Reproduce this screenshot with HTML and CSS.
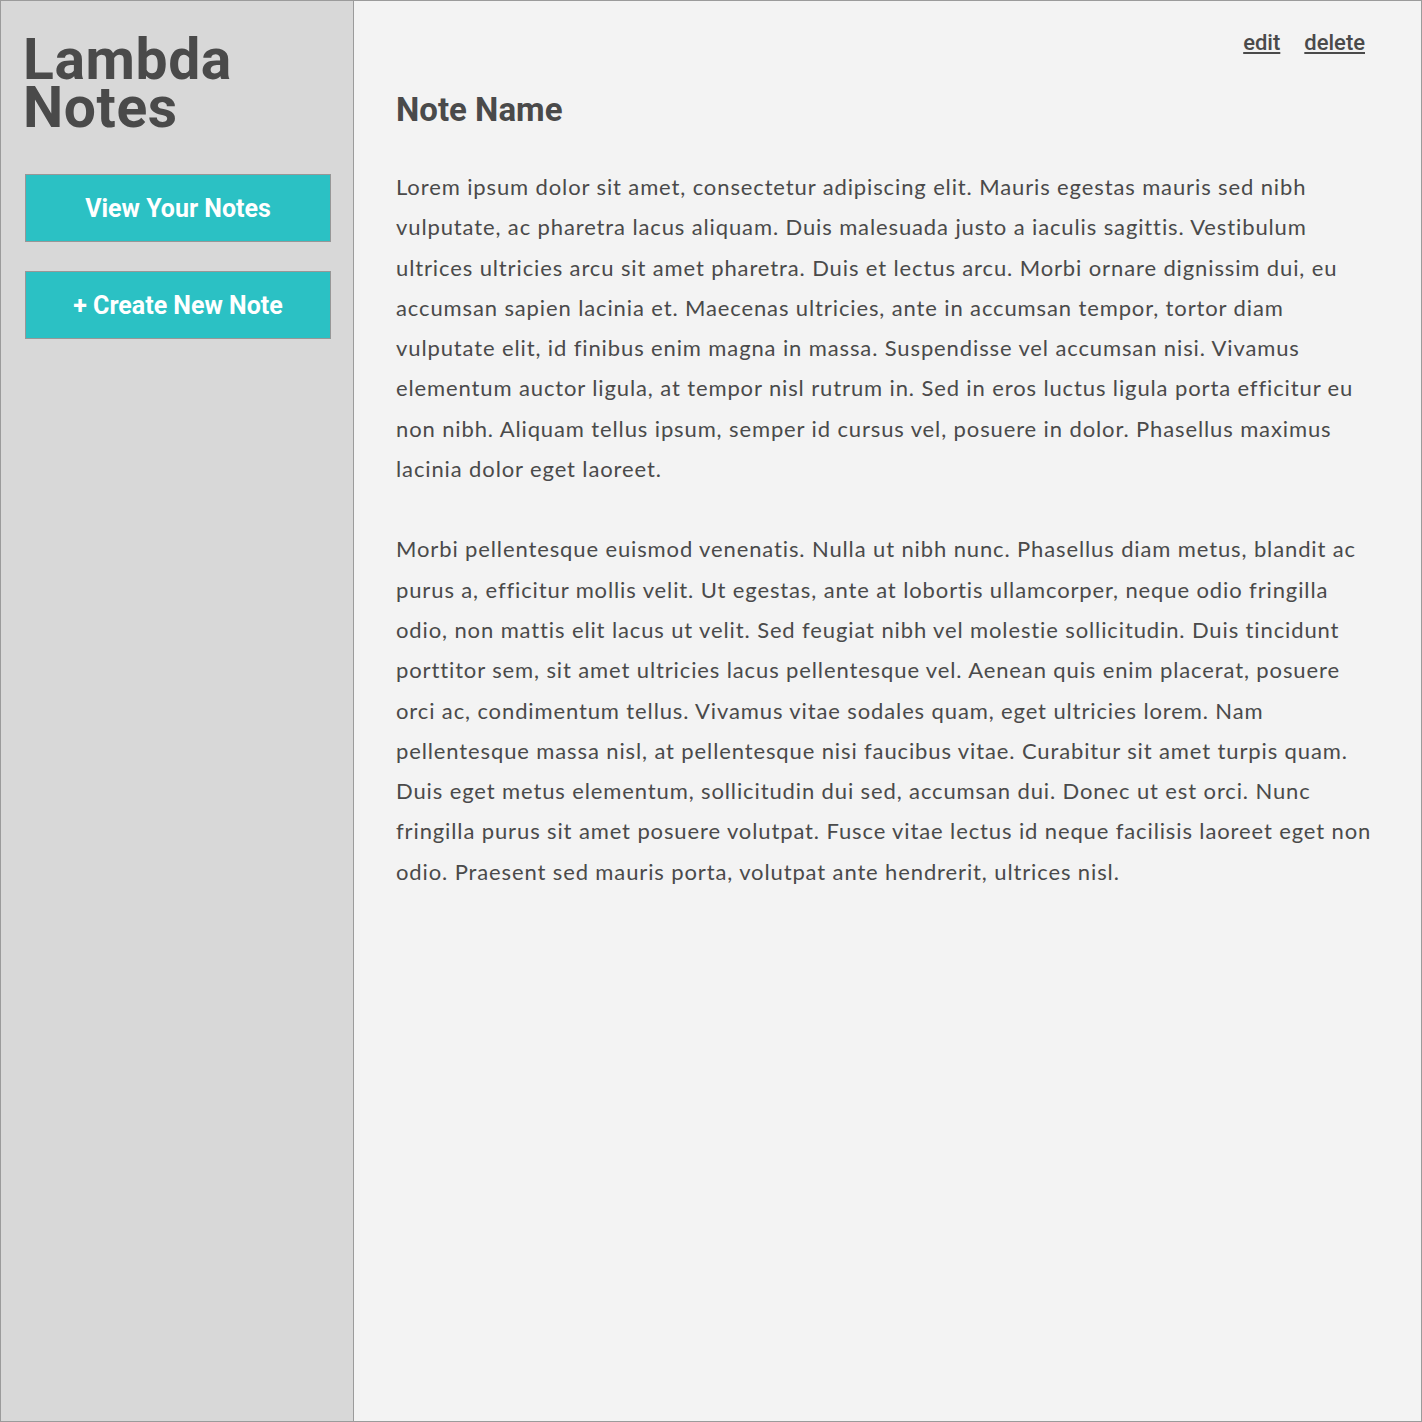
FILE: index.html
```html
<!DOCTYPE html>
<html lang="en">
<head>
<meta charset="utf-8">
<title>Lambda Notes</title>
<link rel="stylesheet" href="styles.css">
</head>
<body>
<div class="app">
  <aside class="sidebar">
    <h1 class="brand">Lambda<br>Notes</h1>
    <button class="nav-btn">View Your Notes</button>
    <button class="nav-btn">+ Create New Note</button>
  </aside>
  <main class="content">
    <div class="actions">
      <a href="#" class="action">edit</a>
      <a href="#" class="action">delete</a>
    </div>
    <h2 class="note-title">Note Name</h2>
    <p class="note-text">Lorem ipsum dolor sit amet, consectetur adipiscing elit. Mauris egestas mauris sed nibh vulputate, ac pharetra lacus aliquam. Duis malesuada justo a iaculis sagittis. Vestibulum ultrices ultricies arcu sit amet pharetra. Duis et lectus arcu. Morbi ornare dignissim dui, eu accumsan sapien lacinia et. Maecenas ultricies, ante in accumsan tempor, tortor diam vulputate elit, id finibus enim magna in massa. Suspendisse vel accumsan nisi. Vivamus elementum auctor ligula, at tempor nisl rutrum in. Sed in eros luctus ligula porta efficitur eu non nibh. Aliquam tellus ipsum, semper id cursus vel, posuere in dolor. Phasellus maximus lacinia dolor eget laoreet.</p>
    <p class="note-text">Morbi pellentesque euismod venenatis. Nulla ut nibh nunc. Phasellus diam metus, blandit ac purus a, efficitur mollis velit. Ut egestas, ante at lobortis ullamcorper, neque odio fringilla odio, non mattis elit lacus ut velit. Sed feugiat nibh vel molestie sollicitudin. Duis tincidunt porttitor sem, sit amet ultricies lacus pellentesque vel. Aenean quis enim placerat, posuere orci ac, condimentum tellus. Vivamus vitae sodales quam, eget ultricies lorem. Nam pellentesque massa nisl, at pellentesque nisi faucibus vitae. Curabitur sit amet turpis quam. Duis eget metus elementum, sollicitudin dui sed, accumsan dui. Donec ut est orci. Nunc fringilla purus sit amet posuere volutpat. Fusce vitae lectus id neque facilisis laoreet eget non odio. Praesent sed mauris porta, volutpat ante hendrerit, ultrices nisl.</p>
  </main>
</div>
</body>
</html>
```
FILE: styles.css
```css
* { box-sizing: border-box; }
html, body { margin: 0; padding: 0; }
body { background: #f3f3f3; }
.app {
  display: flex;
  width: 1422px;
  height: 1422px;
  border: 1px solid #9b9b9b;
  color: #4a4a4a;
}
.sidebar {
  width: 353px;
  flex: none;
  background: #d8d8d8;
  border-right: 1px solid #9b9b9b;
  padding: 35px 22px 0 24px;
  display: flex;
  flex-direction: column;
  align-items: flex-start;
}
.brand {
  margin: 0 0 42px -2px;
  font-family: Roboto, sans-serif;
  font-weight: 700;
  font-size: 57px;
  line-height: 48px;
  letter-spacing: 0.6px;
  color: #4a4a4a;
}
.nav-btn {
  width: 306px;
  height: 68px;
  margin: 0 0 29px 0;
  background: #2bc1c4;
  border: 1px solid #979797;
  color: #ffffff;
  font-family: Roboto, sans-serif;
  font-weight: 700;
  font-size: 25px;
  padding: 0;
}
.content {
  flex: 1;
  background: #f3f3f3;
  padding: 29px 42px 0 42px;
}
.actions {
  display: flex;
  justify-content: flex-end;
  gap: 24px;
  padding-right: 14px;
}
.action {
  font-family: Roboto, sans-serif;
  font-weight: 500;
  font-size: 22px;
  color: #4a4a4a;
  text-decoration: underline;
}
.note-title {
  margin: 35px 0 0 0;
  font-family: Roboto, sans-serif;
  font-weight: 700;
  font-size: 33px;
  color: #4a4a4a;
}
.note-text {
  margin: 40px 0 0 0;
  font-family: Lato, sans-serif;
  font-size: 22px;
  letter-spacing: 0.88px;
  line-height: 40.3px;
  color: #4a4a4a;
}
.note-title + .note-text { margin-top: 38px; }
```
